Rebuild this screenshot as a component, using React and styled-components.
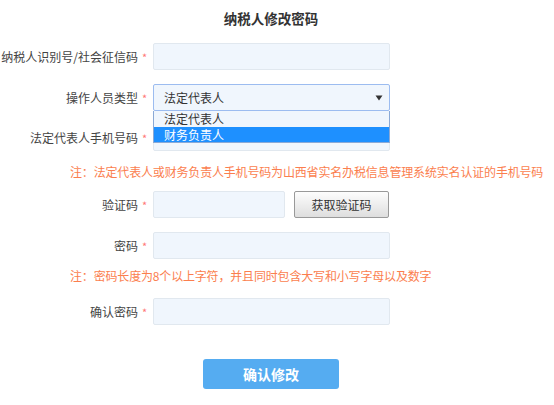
import React from 'react';
import styled, { createGlobalStyle } from 'styled-components';

const GlobalStyle = createGlobalStyle`
    body {
        margin: 0;
        background: #fff;
        font-family: "Microsoft YaHei", "Noto Sans CJK SC", sans-serif;
        color: #333;
    }
`;

const Page = styled.div`
    width: 554px;
    height: 405px;
    overflow: hidden;
`;

const Title = styled.h2`
    margin: 0;
    padding-right: 12px;
    line-height: 36px;
    font-size: 13.5px;
    font-weight: bold;
    text-align: center;
    color: #333;
`;

const Row = styled.div`
    display: flex;
    align-items: center;
    height: 27px;
    margin-top: ${(p) => p.$gap}px;
    position: relative;
`;

const Label = styled.label`
    width: 138px;
    text-align: right;
    font-size: 12px;
    color: #444;
    white-space: nowrap;
`;

const Star = styled.span`
    width: 15px;
    padding-left: 4px;
    box-sizing: border-box;
    color: #f77;
    font-size: 11px;
`;

const Input = styled.input`
    box-sizing: border-box;
    width: ${(p) => p.$width || 237}px;
    height: 27px;
    border: 1px solid #e1e8ef;
    border-radius: 2px;
    background: #f0f6fd;
    outline: none;
    padding: 0 10px;
    font-size: 12px;
    font-family: inherit;
`;

const Select = styled.div`
    box-sizing: border-box;
    width: 237px;
    height: 27px;
    border: 1px solid #9cbcf0;
    border-radius: 2px;
    background: #f0f6fd;
    display: flex;
    align-items: center;
    justify-content: space-between;
    padding: 0 6px 0 10px;
    font-size: 12px;
    color: #333;
`;

const Options = styled.ul`
    position: absolute;
    left: 153px;
    top: 27px;
    width: 237px;
    box-sizing: border-box;
    margin: 0;
    padding: 0;
    list-style: none;
    border: 1px solid #8aa9d6;
    border-top: none;
    background: #f0f6fd;
    z-index: 2;
`;

const Option = styled.li`
    height: 15.5px;
    line-height: 15px;
    padding-left: 10px;
    font-size: 12px;
    color: ${(p) => (p.$active ? '#fff' : '#333')};
    background: ${(p) => (p.$active ? '#1e90ff' : 'transparent')};
`;

const Note = styled.p`
    margin: ${(p) => p.$gap}px 0 0;
    padding-left: 70px;
    line-height: 18px;
    font-size: 12px;
    letter-spacing: -0.17px;
    color: #fb7e4e;
    white-space: nowrap;
`;

const CodeButton = styled.button`
    box-sizing: border-box;
    width: 95px;
    height: 27px;
    margin-left: 9px;
    border: 1px solid #999;
    border-radius: 2px;
    background: linear-gradient(#fdfdfd, #dedede);
    font-size: 12px;
    font-family: inherit;
    color: #333;
`;

const Footer = styled.div`
    display: flex;
    justify-content: center;
    padding-right: 12px;
    margin-top: 34px;
`;

const Submit = styled.button`
    width: 136px;
    height: 30px;
    border: none;
    border-radius: 3px;
    background: #55acf1;
    color: #fff;
    font-size: 14px;
    font-weight: bold;
    font-family: inherit;
`;

const Field = ({ label, gap, children }) => (
    <Row $gap={gap}>
        <Label>{label}</Label>
        <Star>*</Star>
        {children}
    </Row>
);

export default function App() {
    return (
        <Page>
            <GlobalStyle />
            <Title>纳税人修改密码</Title>

            <Field label="纳税人识别号/社会征信码" gap={7}>
                <Input />
            </Field>

            <Field label="操作人员类型" gap={14}>
                <Select>
                    <span>法定代表人</span>
                    <svg width="8" height="6" viewBox="0 0 8 6">
                        <path d="M0.5 0.5 L7.5 0.5 L4 5.5 Z" fill="#333" />
                    </svg>
                </Select>
                <Options>
                    <Option>法定代表人</Option>
                    <Option $active>财务负责人</Option>
                </Options>
            </Field>

            <Field label="法定代表人手机号码" gap={13}>
                <Input />
            </Field>

            <Note $gap={12}>注：法定代表人或财务负责人手机号码为山西省实名办税信息管理系统实名认证的手机号码</Note>

            <Field label="验证码" gap={10}>
                <Input $width={132} />
                <CodeButton>获取验证码</CodeButton>
            </Field>

            <Field label="密码" gap={14}>
                <Input type="password" />
            </Field>

            <Note $gap={8}>注：密码长度为8个以上字符，并且同时包含大写和小写字母以及数字</Note>

            <Field label="确认密码" gap={13}>
                <Input type="password" />
            </Field>

            <Footer>
                <Submit>确认修改</Submit>
            </Footer>
        </Page>
    );
}
